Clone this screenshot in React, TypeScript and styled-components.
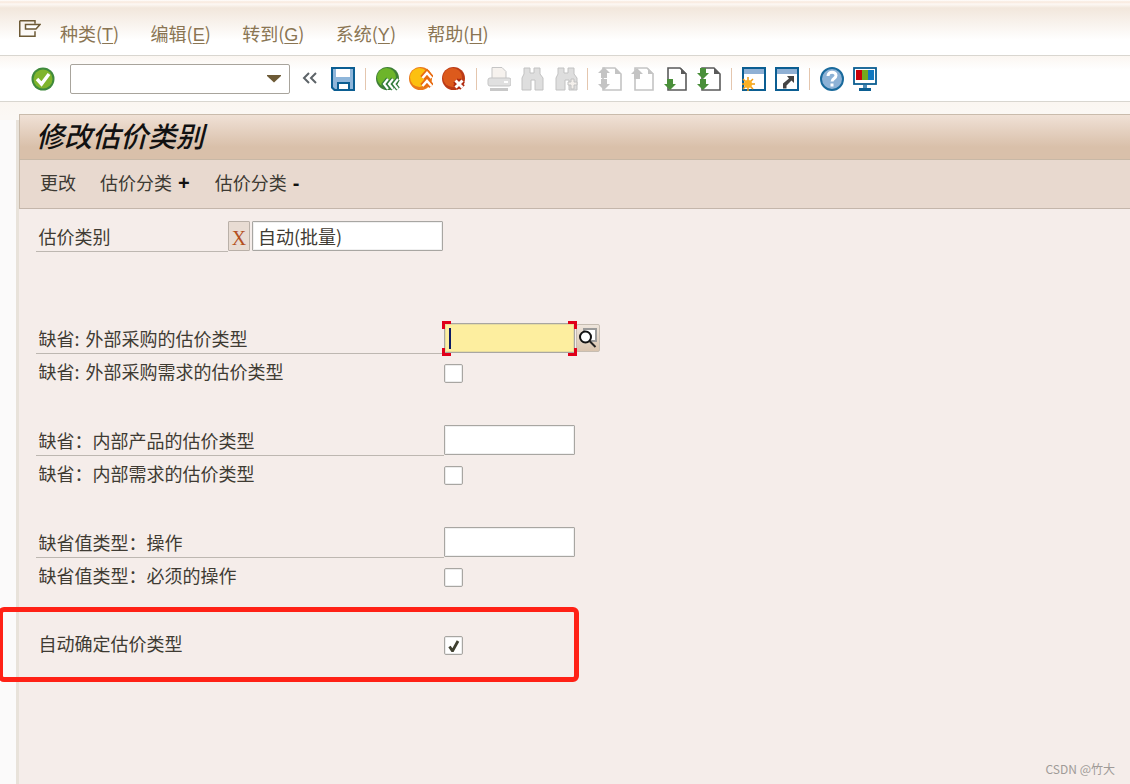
import type { ReactNode } from "react";
import styled, { createGlobalStyle } from "styled-components";

const Global = createGlobalStyle`
  html, body {
    margin: 0;
    padding: 0;
    background: #fff;
  }
  body {
    font-family: "Noto Sans CJK SC", "Liberation Sans", sans-serif;
    overflow: hidden;
  }
`;

const Page = styled.div`
  position: relative;
  width: 1130px;
  height: 784px;
  overflow: hidden;
`;

const MenuBar = styled.div`
  display: flex;
  align-items: flex-start;
  height: 55px;
  padding-left: 19px;
  border-bottom: 1px solid #d9d6d0;
  background: linear-gradient(#fff 0, #f8e9dd 2px, #fdf8f4 4px, #f2e7dc 8px, #fff 40px);
`;

const MenuIcon = styled.svg`
  width: 22px;
  height: 17px;
  margin-top: 20px;
`;

const MenuItems = styled.div`
  display: flex;
  gap: 31.4px;
  margin-left: 19px;
  margin-top: 20px;
`;

const MenuItem = styled.span`
  font-size: 18px;
  line-height: 26px;
  color: #8a7553;
  u {
    font-family: "Liberation Sans", sans-serif;
    text-underline-offset: 2px;
  }
`;

const Toolbar = styled.div`
  display: flex;
  align-items: center;
  height: 45px;
  padding-left: 31px;
  border-bottom: 1px solid #d9d6d0;
  background: linear-gradient(#fbf6f1, #fff 14px);
`;

const Tool = styled.svg`
  width: 24px;
  height: 24px;
  flex: none;
`;

const CommandBox = styled.div`
  display: flex;
  align-items: center;
  justify-content: flex-end;
  box-sizing: border-box;
  width: 220px;
  height: 30px;
  margin: 0 12px 0 15px;
  padding-right: 8px;
  background: #fff;
  border: 1px solid #a8a49c;
  border-radius: 2px;
`;

const DropArrow = styled.div`
  width: 14px;
  height: 8px;
  background: #6d5a36;
  clip-path: polygon(0 0, 100% 0, 100% 20%, 50% 100%, 0 20%);
`;

const Chevrons = styled.svg`
  flex: none;
  width: 15px;
  height: 14px;
  margin-right: 14px;
  margin-top: -2px;
`;

const Separator = styled.div<{ $left: number }>`
  width: 1px;
  height: 22px;
  margin: 0 10px 0 ${(p) => p.$left}px;
  background: #e4c6ae;
`;

const ToolGroup = styled.div<{ $gap: number }>`
  display: flex;
  gap: ${(p) => p.$gap}px;
`;

const Main = styled.div`
  display: flex;
  height: 682px;
  background: linear-gradient(#fbf6f1, #fbf8f5 14px);
`;

const Rail = styled.div`
  flex: none;
  box-sizing: border-box;
  width: 19px;
  margin-top: 18px;
  border-right: 3px solid #e8e2da;
  background: #fbfafa;
`;

const Content = styled.div`
  flex: 1;
  margin-top: 12px;
  background: #f5edea;
`;

const TitleBar = styled.div`
  box-sizing: border-box;
  height: 46px;
  padding-left: 17px;
  border-top: 1px solid #c9bbac;
  border-bottom: 1px solid #c8b8a6;
  border-left: 1px solid #c9bbac;
  background: linear-gradient(#f0e1d6 0, #d9c0aa 32px, #d9c0aa);
`;

const Title = styled.h1`
  margin: 0 0 0 -1px;
  font-size: 28px;
  line-height: 41px;
  font-weight: 500;
  font-style: italic;
  color: #111;
`;

const ActionBar = styled.div`
  display: flex;
  gap: 24px;
  box-sizing: border-box;
  height: 49px;
  padding: 9px 0 0 20px;
  border-bottom: 1px solid #c4b6ab;
  border-left: 1px solid #c9bbac;
  background: #e8d9cf;
`;

const Action = styled.span`
  font-size: 18px;
  line-height: 26px;
  color: #3d3a33;
  b {
    font-family: "Liberation Sans", sans-serif;
    font-size: 20px;
    color: #111;
    margin-left: 6px;
    padding-right: 1px;
  }
`;

const Form = styled.div`
  padding: 12px 0 0 17px;
`;

const Row = styled.div<{ $top?: number }>`
  display: flex;
  align-items: flex-start;
  margin-top: ${(p) => p.$top ?? 0}px;
`;

const Label = styled.label<{ $width: number; $line?: boolean }>`
  box-sizing: border-box;
  width: ${(p) => p.$width}px;
  height: ${(p) => (p.$line ? 31 : 19)}px;
  padding-left: 2.5px;
  font-size: 18px;
  word-spacing: 2px;
  line-height: ${(p) => (p.$line ? 31 : 15)}px;
  color: #3f3b33;
  white-space: nowrap;
  border-bottom: ${(p) => (p.$line ? "1px solid #bdb7b1" : "none")};
`;

const KeyBox = styled.div`
  box-sizing: border-box;
  width: 22px;
  height: 30px;
  margin-right: 2px;
  border: 1px solid #b9b0a8;
  border-radius: 1px;
  background: #e8dcd3;
  font-family: "Liberation Serif", serif;
  font-size: 20px;
  line-height: 32px;
  text-align: center;
  color: #b4501e;
`;

const Input = styled.div<{ $width: number; $focused?: boolean }>`
  position: relative;
  box-sizing: border-box;
  width: ${(p) => p.$width}px;
  height: 30px;
  padding-left: 5px;
  background: ${(p) => (p.$focused ? "#fdee9f" : "#fff")};
  border: 1px solid #a8a6a2;
  border-radius: 1px;
  box-shadow: inset 0 0 0 1px ${(p) => (p.$focused ? "#e6dca0" : "#f0f0f0")};
  font-size: 18px;
  line-height: 28px;
  color: #3f3b33;
`;

const Caret = styled.div`
  position: absolute;
  left: 4px;
  top: 4px;
  width: 2px;
  height: 21px;
  background: #0c1a66;
`;

const Corner = styled.div<{ $x: "left" | "right"; $y: "top" | "bottom" }>`
  position: absolute;
  ${(p) => p.$x}: -3px;
  ${(p) => p.$y}: ${(p) => (p.$y === "top" ? -3 : -4)}px;
  width: 9px;
  height: 8px;
  border-${(p) => p.$x}: 3px solid #e0001a;
  border-${(p) => p.$y}: 3px solid #e0001a;
  box-sizing: border-box;
`;

const SearchButton = styled.div`
  display: flex;
  align-items: center;
  justify-content: center;
  box-sizing: border-box;
  width: 24px;
  height: 28px;
  margin: 1px 0 0 1px;
  border: 1px solid #c6bdb2;
  border-radius: 2px;
  background: linear-gradient(#eee5dc, #d9c4ae);
`;

const Check = styled.div`
  display: flex;
  align-items: center;
  justify-content: center;
  box-sizing: border-box;
  width: 19px;
  height: 19px;
  background: #fff;
  border: 1px solid #a8a6a2;
  border-radius: 2px;
  box-shadow: inset 0 0 0 1px #ececec;
`;

const Highlight = styled.div`
  position: absolute;
  left: -2px;
  top: 607px;
  box-sizing: border-box;
  width: 581px;
  height: 75px;
  border: 5px solid #ff2116;
  border-radius: 6px;
`;

const Watermark = styled.div`
  position: absolute;
  right: 15px;
  bottom: 7px;
  font-size: 12px;
  line-height: 16px;
  color: #a09b98;
`;

const OkIcon = () => (
  <Tool viewBox="0 0 24 24">
    <circle cx="12" cy="12" r="11.5" fill="#3f8a3c" />
    <circle cx="12" cy="12" r="9.5" fill="#7fb52c" />
    <path d="M6 12l4.5 5L18 7" fill="none" stroke="#fff" strokeWidth="3.4" />
  </Tool>
);

const SaveIcon = () => (
  <Tool viewBox="0 0 24 24">
    <path d="M0 0h24v24H3l-3-3z" fill="#0b5e92" />
    <path d="M2 2h20v20H4l-2-2z" fill="#8fb6da" />
    <rect x="5" y="2" width="14" height="8" fill="#fff" />
    <rect x="6" y="15" width="13" height="9" fill="#0b5e92" />
    <rect x="8" y="17" width="9" height="5" fill="#fff" />
  </Tool>
);

const StatusIcon = ({ face, ring, children }: { face: string; ring: string; children: ReactNode }) => (
  <Tool viewBox="0 0 24 24">
    <circle cx="11.500" cy="11.500" r="11.500" fill={ring} />
    <circle cx="10.500" cy="10.500" r="9.500" fill={face} />
    {children}
  </Tool>
);

const PrintIcon = () => (
  <Tool viewBox="0 0 24 24">
    <path d="M5 .5h10l4 4v7H5z" fill="#f6f2ee" stroke="#c5c5c5" />
    <rect x="1" y="11" width="23" height="8" rx="2" fill="#e0e0e0" stroke="#c5c5c5" />
    <rect x="17" y="14" width="4" height="2" fill="#fff" />
    <rect x="3" y="21" width="18" height="3" fill="#c8c8c8" />
  </Tool>
);

const BinocularIcon = ({ plus }: { plus?: boolean }) => (
  <Tool viewBox="0 0 24 24">
    <path d="M3 1h6v5h4V1h6v6l3 4v12h-8V13H10v10H1V11l2-4z" fill="#dedede" stroke="#c2c2c2" />
    {plus && <path d="M13 15h3v-3h3v3h3v3h-3v4h-3v-4h-3z" fill="#f4f0ec" stroke="#c2c2c2" />}
  </Tool>
);

const PageIcon = ({ stroke, left = 5, arrows }: { stroke: string; left?: number; arrows: ReactNode }) => (
  <Tool viewBox="0 0 24 24">
    <path d={`M${left} 1h12l6 6v16H${left}z`} fill="#fff" stroke={stroke} strokeWidth="1.6" />
    <path d="M17 1v6h6z" fill={stroke} />
    {arrows}
  </Tool>
);

const arrow = (y: number, up: boolean, fill: string) =>
  up ? (
    <path d={`M0 ${y + 6}l6-6 6 6H9v5H3v-5z`} fill={fill} />
  ) : (
    <path d={`M3 ${y}h6v5h3l-6 6-6-6h3z`} fill={fill} />
  );

const WindowIcon = ({ children }: { children: ReactNode }) => (
  <Tool viewBox="0 0 24 24">
    <rect x="1" y="1" width="22" height="22" fill="#fff" stroke="#0b5e92" strokeWidth="2" />
    <rect x="2" y="2" width="20" height="5" fill="#8fb0d4" />
    {children}
  </Tool>
);

const HelpIcon = () => (
  <Tool viewBox="0 0 24 24">
    <circle cx="12" cy="12" r="11" fill="#8db2d6" stroke="#1a6a9c" strokeWidth="2" />
    <path d="M8 9c0-5 8-5 8-.5 0 3-4 3-4 6" fill="none" stroke="#fff" strokeWidth="3" />
    <rect x="10.500" y="16.500" width="3" height="3" fill="#fff" />
  </Tool>
);

const MonitorIcon = () => (
  <Tool viewBox="0 0 24 24">
    <rect x="1" y="1" width="22" height="16" fill="#fff" stroke="#0b5e92" strokeWidth="1.800" />
    <rect x="3" y="3" width="6" height="10" fill="#c8000a" />
    <rect x="9" y="3" width="6" height="10" fill="#74a81e" />
    <rect x="15" y="3" width="6" height="10" fill="#1078c0" />
    <rect x="10" y="18" width="4" height="3" fill="#4d8db8" />
    <rect x="6" y="21" width="12" height="3" fill="#0b5e92" />
  </Tool>
);

const grey = "#c4c4c4";
const dark = "#5a5a5a";
const green = "#4a8f3a";

const App = () => (
  <Page>
    <Global />
    <MenuBar>
      <MenuIcon viewBox="0 0 22 17">
        <path d="M.75.75H16v3M.75.75v15.500H16v-5" fill="none" stroke="#6d5a36" strokeWidth="1.500" />
        <path d="M6.500 4.500H21L17 9H6.500z" fill="#fff" stroke="#6d5a36" strokeWidth="1.500" />
      </MenuIcon>
      <MenuItems>
        <MenuItem>种类(<u>T</u>)</MenuItem>
        <MenuItem>编辑(<u>E</u>)</MenuItem>
        <MenuItem>转到(<u>G</u>)</MenuItem>
        <MenuItem>系统(<u>Y</u>)</MenuItem>
        <MenuItem>帮助(<u>H</u>)</MenuItem>
      </MenuItems>
    </MenuBar>
    <Toolbar>
      <OkIcon />
      <CommandBox>
        <DropArrow />
      </CommandBox>
      <Chevrons viewBox="0 0 15 14">
        <path d="M7 2L2 7l5 5M14 2L9 7l5 5" fill="none" stroke="#5d6468" strokeWidth="2" />
      </Chevrons>
      <SaveIcon />
      <Separator $left={10} />
      <ToolGroup $gap={9}>
        <StatusIcon face="#6db52a" ring="#3f7f36">
          <path d="M12 12l-4 5 4 5M17 12l-4 5 4 5M22 12l-4 5 4 5" fill="none" stroke="#2f7a3a" strokeWidth="4.500" />
          <path d="M12 12l-4 5 4 5M17 12l-4 5 4 5M22 12l-4 5 4 5" fill="none" stroke="#fff" strokeWidth="2.200" />
        </StatusIcon>
        <StatusIcon face="#fcc010" ring="#ea7a1a">
          <path d="M13.500 11l4.500-5 4.500 5M13.500 19l4.500-5 4.500 5" fill="none" stroke="#e86a10" strokeWidth="6" />
          <path d="M13.500 11l4.500-5 4.500 5M13.500 19l4.500-5 4.500 5" fill="none" stroke="#fff" strokeWidth="2.600" />
        </StatusIcon>
        <StatusIcon face="#dc5a1c" ring="#bb3a16">
          <path d="M13.500 13.500l7 7M20.500 13.500l-7 7" stroke="#b02a10" strokeWidth="6.500" />
          <path d="M13.500 13.500l7 7M20.500 13.500l-7 7" stroke="#fff" strokeWidth="3" />
        </StatusIcon>
      </ToolGroup>
      <Separator $left={10} />
      <ToolGroup $gap={10}>
        <PrintIcon />
        <BinocularIcon />
        <BinocularIcon plus />
      </ToolGroup>
      <Separator $left={8} />
      <ToolGroup $gap={9}>
        <PageIcon stroke={grey} arrows={<>{arrow(0, true, grey)}{arrow(12, false, grey)}</>} />
        <PageIcon stroke={grey} left={4} arrows={arrow(1, true, grey)} />
        <PageIcon stroke={dark} left={4} arrows={arrow(12, false, green)} />
        <PageIcon stroke={dark} arrows={<>{arrow(1, false, green)}{arrow(12, false, green)}</>} />
      </ToolGroup>
      <Separator $left={10} />
      <ToolGroup $gap={9}>
        <WindowIcon>
          <path d="M6 10v14M-1 17h14M1 12l10 10M11 12L1 22" stroke="#f09a10" strokeWidth="1.500" />
          <circle cx="6" cy="17" r="4" fill="#fcb020" />
        </WindowIcon>
        <WindowIcon>
          <path d="M12 9h7v7l-2.500-2.500-5 5v3H8v-5l6-5z" fill="#444" />
        </WindowIcon>
      </ToolGroup>
      <Separator $left={10} />
      <ToolGroup $gap={9}>
        <HelpIcon />
        <MonitorIcon />
      </ToolGroup>
    </Toolbar>
    <Main>
      <Rail />
      <Content>
        <TitleBar>
          <Title>修改估价类别</Title>
        </TitleBar>
        <ActionBar>
          <Action>更改</Action>
          <Action>估价分类<b>+</b></Action>
          <Action>估价分类<b>-</b></Action>
        </ActionBar>
        <Form>
          <Row>
            <Label $width={192} $line>估价类别</Label>
            <KeyBox>X</KeyBox>
            <Input $width={191}>自动(批量)</Input>
          </Row>
          <Row $top={71}>
            <Label $width={408} $line>缺省: 外部采购的估价类型</Label>
            <Input $width={131} $focused>
              <Caret />
              <Corner $x="left" $y="top" />
              <Corner $x="right" $y="top" />
              <Corner $x="left" $y="bottom" />
              <Corner $x="right" $y="bottom" />
            </Input>
            <SearchButton>
              <svg width="20" height="20" viewBox="0 0 20 20">
                <rect x="6" y="1" width="12" height="12" fill="#fff" stroke="#9a9a9a" strokeWidth="2" />
                <circle cx="7.500" cy="9" r="5.500" fill="#fff" stroke="#111" strokeWidth="2" />
                <path d="M11.500 13l6 6" stroke="#222" strokeWidth="2" />
              </svg>
            </SearchButton>
          </Row>
          <Row $top={10}>
            <Label $width={408}>缺省: 外部采购需求的估价类型</Label>
            <Check />
          </Row>
          <Row $top={42}>
            <Label $width={408} $line>缺省：内部产品的估价类型</Label>
            <Input $width={131} />
          </Row>
          <Row $top={10}>
            <Label $width={408}>缺省：内部需求的估价类型</Label>
            <Check />
          </Row>
          <Row $top={42}>
            <Label $width={408} $line>缺省值类型：操作</Label>
            <Input $width={131} />
          </Row>
          <Row $top={10}>
            <Label $width={408}>缺省值类型：必须的操作</Label>
            <Check />
          </Row>
          <Row $top={49}>
            <Label $width={408}>自动确定估价类型</Label>
            <Check>
              <svg width="12" height="12" viewBox="0 0 12 12">
                <path d="M1.500 6.500L4.500 11 10 1" fill="none" stroke="#3f4030" strokeWidth="2.800" />
              </svg>
            </Check>
          </Row>
        </Form>
      </Content>
    </Main>
    <Highlight />
    <Watermark>CSDN @竹大</Watermark>
  </Page>
);

export default App;
